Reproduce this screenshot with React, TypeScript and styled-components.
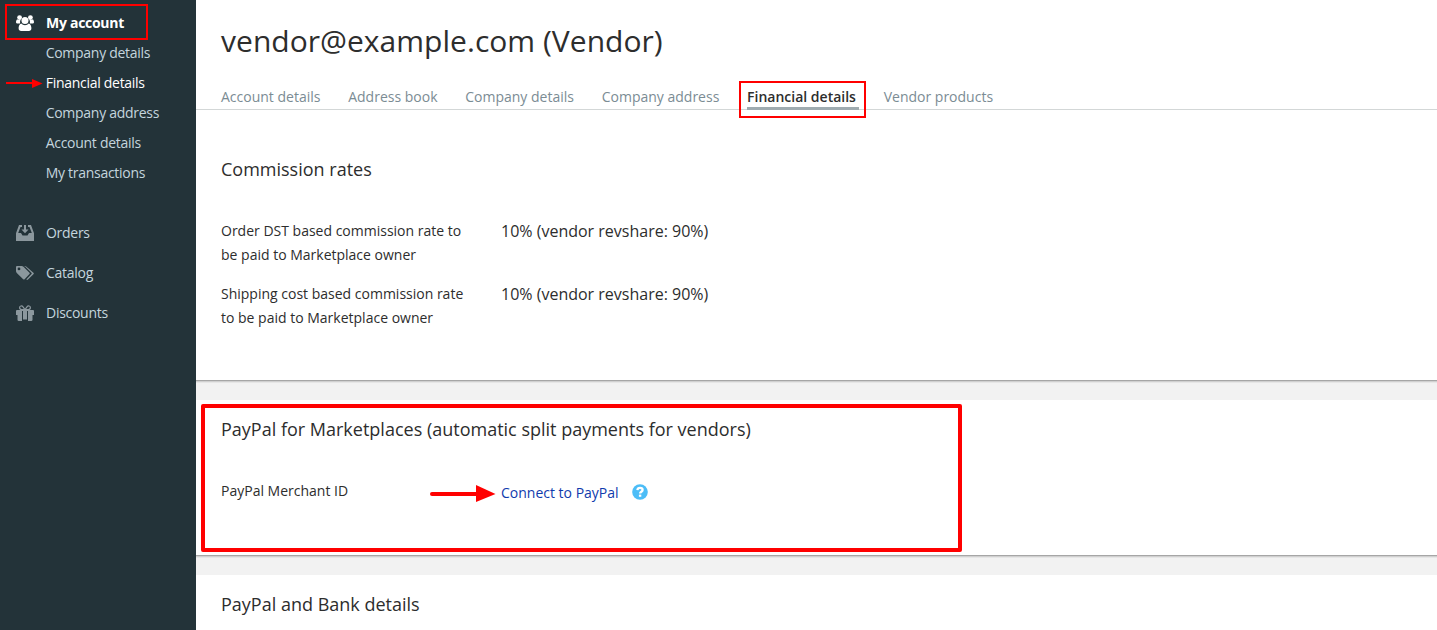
import React from "react";
import styled, { createGlobalStyle } from "styled-components";

const GlobalStyle = createGlobalStyle`
  * { box-sizing: border-box; }
  body { margin: 0; background: #f2f2f2; color: #2d2d2d; overflow: hidden; font-family: "Open Sans", sans-serif; }
`;

const Page = styled.div`
  position: relative;
  display: flex;
  width: 100%;
  height: 630px;
  overflow: hidden;
`;

const Sidebar = styled.nav`
  flex: 0 0 196px;
  background: #233339;
  padding-top: 8px;
`;

const MenuItem = styled.a<{ $active?: boolean }>`
  display: flex;
  align-items: center;
  height: 30px;
  margin-bottom: ${(p) => (p.$active ? 0 : "10px")};
  padding-left: 16px;
  gap: 12px;
  font-size: 14px;
  line-height: 30px;
  white-space: nowrap;
  font-weight: ${(p) => (p.$active ? 700 : 400)};
  color: ${(p) => (p.$active ? "#fff" : "#c3d5de")};
  letter-spacing: -0.28px;

  svg {
    flex: 0 0 18px;
    color: ${(p) => (p.$active ? "#fff" : "#8b979d")};
  }
`;

const SubMenu = styled.div`
  padding-bottom: 30px;
`;

const SubItem = styled.a<{ $active?: boolean }>`
  display: block;
  height: 30px;
  padding-left: 45.7px;
  font-size: 14px;
  line-height: 30px;
  letter-spacing: -0.28px;
  white-space: nowrap;
  color: ${(p) => (p.$active ? "#fff" : "#c3d5de")};
`;

const Main = styled.main`
  flex: 1;
  min-width: 0;
  display: flex;
  flex-direction: column;
  gap: 20px;
`;

const Panel = styled.section<{ $height: number }>`
  flex: 0 0 ${(p) => p.$height}px;
  padding-left: 25px;
  background: #fff;
  box-shadow: 0 1px 0 #a6a6a6, 0 2px 0 #d0d0d0, 0 3px 0 #e6e6e6;
`;

const Title = styled.h1`
  margin: 0;
  padding-top: 18px;
  height: 85px;
  font-size: 30px;
  font-weight: 400;
  line-height: 46px;
  letter-spacing: 0.03px;
`;

const Tabs = styled.div`
  display: flex;
  gap: 24.75px;
  height: 25px;
  margin-left: -25px;
  padding-left: 25px;
  border-bottom: 1px solid #d3d7d7;
`;

const Tab = styled.a<{ $active?: boolean }>`
  height: ${(p) => (p.$active ? "25px" : "24px")};
  padding-right: 3px;
  font-size: 14px;
  line-height: 24px;
  white-space: nowrap;
  font-weight: ${(p) => (p.$active ? 600 : 400)};
  color: ${(p) => (p.$active ? "#2d2d2d" : "#7b8c94")};
  border-bottom: ${(p) => (p.$active ? "3px solid #9fabb0" : "0")};
`;

const Heading = styled.h2<{ $top: number }>`
  margin: 0;
  padding-top: ${(p) => p.$top}px;
  font-size: 18px;
  font-weight: 400;
  line-height: 26px;
`;

const Fields = styled.div`
  display: grid;
  grid-template-columns: 250px auto;
  column-gap: 30px;
  row-gap: 15px;
  padding-top: 37px;
`;

const Label = styled.div`
  font-size: 14px;
  line-height: 24px;
`;

const Value = styled.div`
  font-size: 16px;
  line-height: 24px;
`;

const LinkValue = styled.div`
  display: flex;
  align-items: center;
  gap: 13px;
  padding-top: 2px;
  font-size: 14px;
  line-height: 24px;
  color: #0f3bad;

  svg {
    margin-bottom: 2px;
  }
`;

const Annotations = styled.svg`
  position: absolute;
  left: 0;
  top: 0;
  pointer-events: none;
`;

const UsersIcon = () => (
  <svg width="18" height="16" viewBox="0 0 18 16" fill="currentColor">
    <circle cx="3.6" cy="2.6" r="2.4" />
    <circle cx="14.4" cy="2.6" r="2.4" />
    <path d="M1.1 4.3C.3 5.2 0 6.4 0 7.3 0 8.2.8 8.6 1.7 8.6H4.1A4.8 4.8 0 0 1 4.9 4.3 4 4 0 0 1 1.1 4.3ZM16.9 4.3C17.7 5.2 18 6.4 18 7.3 18 8.2 17.2 8.6 16.3 8.6H13.9A4.8 4.8 0 0 0 13.1 4.3 4 4 0 0 0 16.9 4.3Z" />
    <circle cx="9" cy="5.6" r="3.5" />
    <path d="M5.2 8.5C3.2 9.3 2.6 11.5 2.6 13.3 2.6 15 3.6 16 5.2 16H12.8C14.4 16 15.4 15 15.4 13.3 15.4 11.5 14.8 9.3 12.8 8.5A5 5 0 0 1 5.2 8.5Z" />
  </svg>
);

const OrdersIcon = () => (
  <svg width="18" height="16" viewBox="0 0 18 16" fill="currentColor">
    <path d="M3 0H6V2H4.5L2.2 8H5L6.5 10.5H11.5L13 8H15.8L13.5 2H12V0H15L18 8.3V16H0V8.3Z" />
    <path d="M8 0H10V4.5H12.5L9 8.2 5.5 4.5H8Z" />
  </svg>
);

const CatalogIcon = () => (
  <svg width="18" height="14" viewBox="0 0 18 14" fill="currentColor">
    <path fillRule="evenodd" d="M0 1Q0 0 1 0H5.6Q6.7 0 7.5.8L13.5 6.7Q14.2 7.4 13.5 8.1L8.6 13.2Q7.9 13.9 7.2 13.2L.8 7Q0 6.3 0 5.1ZM3 1.5A1.4 1.4 0 1 0 3 4.3 1.4 1.4 0 1 0 3 1.5Z" />
    <path d="M7.7 0H8.6Q9.7 0 10.5.8L17.4 6.7Q18.2 7.4 17.4 8.2L12 13.5Q11.1 14.3 10.3 13.4L15.5 8.1Q16.1 7.4 15.4 6.7L9.6.9Q8.8.2 7.7 0Z" />
  </svg>
);

const DiscountsIcon = () => (
  <svg width="18" height="16" viewBox="0 0 18 16" fill="currentColor">
    <path d="M1 5H17Q18 5 18 6V10H16.5V14.7Q16.5 16 15.2 16H12V6H11V14.5H7V6H6V16H2.8Q1.5 16 1.5 14.7V10H0V6Q0 5 1 5Z" />
    <path d="M9 4.6 7 1.8C5.9.3 3.6.8 3.6 2.6 3.6 3.900 4.600 4.600 5.700 4.600ZM9 4.600 11 1.800C12.100.300 14.400.800 14.400 2.600 14.400 3.900 13.400 4.600 12.300 4.600Z" fill="none" stroke="currentColor" strokeWidth="1.2" />
  </svg>
);

const HelpIcon = () => (
  <svg width="16" height="16" viewBox="0 0 16 16">
    <circle cx="8" cy="8" r="7.8" fill="#4cbdf7" />
    <path d="M5.4 6.1C5.6 4.5 6.6 3.8 8 3.8 9.6 3.8 10.6 4.7 10.6 5.9 10.6 7.7 8.1 7.7 8.1 9.5" fill="none" stroke="#fff" strokeWidth="2.3" />
    <rect x="6.9" y="10.6" width="2.4" height="2.2" fill="#fff" />
  </svg>
);

const tabs = ["Account details", "Address book", "Company details", "Company address", "Financial details", "Vendor products"];
const subItems = ["Company details", "Financial details", "Company address", "Account details", "My transactions"];

export default function App() {
  return (
    <>
      <GlobalStyle />
      <Page>
        <Sidebar>
          <MenuItem $active><UsersIcon /><span>My account</span></MenuItem>
          <SubMenu>
            {subItems.map((item) => (
              <SubItem key={item} $active={item === "Financial details"}>{item}</SubItem>
            ))}
          </SubMenu>
          <MenuItem><OrdersIcon /><span>Orders</span></MenuItem>
          <MenuItem><CatalogIcon /><span>Catalog</span></MenuItem>
          <MenuItem><DiscountsIcon /><span>Discounts</span></MenuItem>
        </Sidebar>
        <Main>
          <Panel $height={380}>
            <Title>vendor@example.com (Vendor)</Title>
            <Tabs>
              {tabs.map((tab) => (
                <Tab key={tab} $active={tab === "Financial details"}>{tab}</Tab>
              ))}
            </Tabs>
            <Heading $top={46}>Commission rates</Heading>
            <Fields>
              <Label>Order DST based commission rate to be paid to Marketplace owner</Label>
              <Value>10% (vendor revshare: 90%)</Value>
              <Label>Shipping cost based commission rate to be paid to Marketplace owner</Label>
              <Value>10% (vendor revshare: 90%)</Value>
            </Fields>
          </Panel>
          <Panel $height={155}>
            <Heading $top={16}>PayPal for Marketplaces (automatic split payments for vendors)</Heading>
            <Fields>
              <Label>PayPal Merchant ID</Label>
              <LinkValue><span>Connect to PayPal</span><HelpIcon /></LinkValue>
            </Fields>
          </Panel>
          <Panel $height={155}>
            <Heading $top={16}>PayPal and Bank details</Heading>
          </Panel>
        </Main>
        <Annotations width="1437" height="630" viewBox="0 0 1437 630" fill="none" stroke="#f00">
          <rect x="6" y="5" width="141" height="34" strokeWidth="2" />
          <rect x="740" y="82" width="125" height="35" strokeWidth="2" />
          <rect x="203" y="406" width="757" height="144" strokeWidth="4" strokeLinejoin="round" />
          <path d="M6 83H34" strokeWidth="2" />
          <path d="M32 79 42.5 83.5 32 88Z" fill="#f00" stroke="none" />
          <path d="M432 494H477" strokeWidth="4" strokeLinecap="round" />
          <path d="M476 485 495.5 494 476 502Z" fill="#f00" stroke="none" />
        </Annotations>
      </Page>
    </>
  );
}
